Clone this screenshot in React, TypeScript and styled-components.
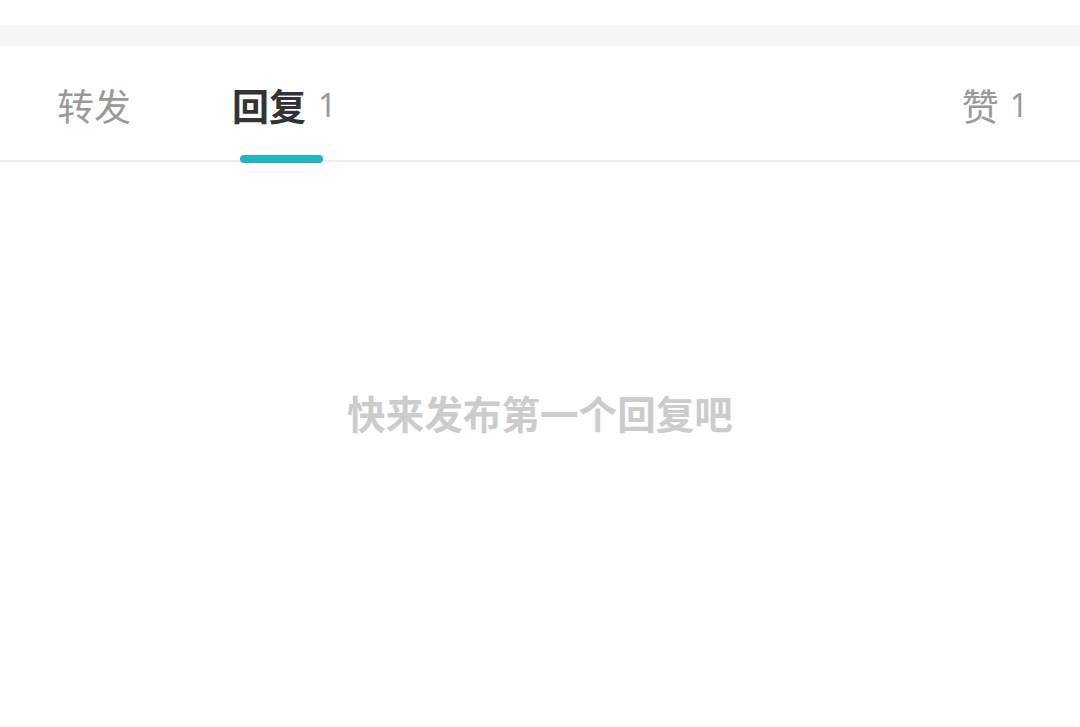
import React from "react";
import styled, { createGlobalStyle } from "styled-components";

const Global = createGlobalStyle`
  html, body { margin: 0; padding: 0; background: #fff; }
  body { font-family: "Noto Sans", "Noto Sans CJK SC", sans-serif; }
`;

const Page = styled.div`
  width: 1080px;
  height: 727px;
  display: flex;
  flex-direction: column;
  background: #fff;
  overflow: hidden;
`;

const TopSpace = styled.div`
  height: 25px;
  background: #fff;
`;

const Band = styled.div`
  height: 21px;
  background: #f5f6f7;
`;

const TabBar = styled.div`
  height: 114px;
  display: flex;
  align-items: stretch;
  padding: 0 52px 0 57px;
  border-bottom: 2px solid #eeeeee;
`;

const Tab = styled.div<{ $active?: boolean; $right?: boolean }>`
  position: relative;
  display: flex;
  align-items: center;
  gap: ${(p) => (p.$right ? "11px" : "12px")};
  margin-left: ${(p) => (p.$right ? "auto" : "0")};
  margin-right: ${(p) => (p.$right ? "0" : "101px")};
  padding-top: 4px;
  font-family: "Noto Sans CJK SC", sans-serif;
  font-size: 37px;
  font-weight: ${(p) => (p.$active ? 700 : 400)};
  color: ${(p) => (p.$active ? "#333333" : "#999999")};
  line-height: 1;
`;

const Count = styled.span`
  font-family: "Noto Sans", sans-serif;
  font-size: 32px;
  font-weight: 400;
  color: #999999;
`;

const Indicator = styled.div`
  position: absolute;
  left: 8px;
  width: 83px;
  bottom: -3px;
  height: 8px;
  border-radius: 4px;
  background: #1fb4c2;
`;

const Empty = styled.div`
  flex: 1;
  display: flex;
  justify-content: center;
  padding-top: 231px;
  font-family: "Noto Sans CJK SC", sans-serif;
  font-size: 38.6px;
  font-weight: 700;
  color: #cccccc;
  line-height: 1;
`;

export default function App() {
  return (
    <Page>
      <Global />
      <TopSpace />
      <Band />
      <TabBar>
        <Tab>转发</Tab>
        <Tab $active>
          回复<Count>1</Count>
          <Indicator />
        </Tab>
        <Tab $right>
          赞<Count>1</Count>
        </Tab>
      </TabBar>
      <Empty>快来发布第一个回复吧</Empty>
    </Page>
  );
}
